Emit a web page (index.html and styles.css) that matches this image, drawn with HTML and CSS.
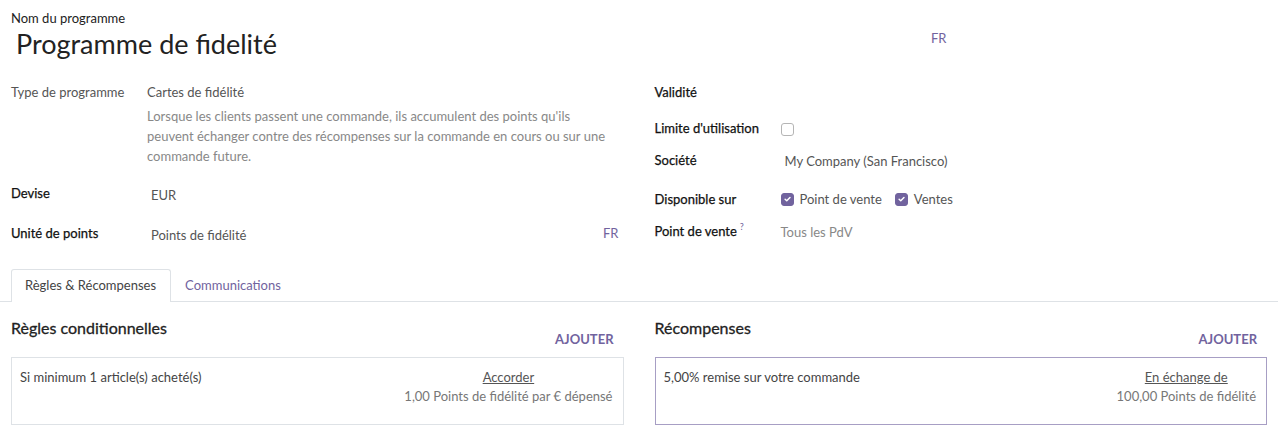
FILE: index.html
```html
<!DOCTYPE html>
<html lang="fr">
<head>
<meta charset="utf-8">
<title>Programme de fidelité</title>
<link rel="stylesheet" href="styles.css">
</head>
<body>
<div class="sheet">
  <div class="title-area">
    <div class="title-label">Nom du programme</div>
    <div class="title-row">
      <div class="title">Programme de fidelité</div>
      <span class="lang lang-title">FR</span>
    </div>
  </div>

  <div class="groups">
    <div class="group group-left">
      <div class="label label-light">Type de programme</div>
      <div class="value">
        <div class="val-main">Cartes de fidélité</div>
        <div class="desc">Lorsque les clients passent une commande, ils accumulent des points qu'ils peuvent échanger contre des récompenses sur la commande en cours ou sur une commande future.</div>
      </div>

      <div class="label row-devise">Devise</div>
      <div class="value input row-devise">EUR</div>

      <div class="label row-unit">Unité de points</div>
      <div class="value input row-unit unit-value"><span>Points de fidélité</span><span class="lang">FR</span></div>
    </div>

    <div class="group group-right">
      <div class="label r1">Validité</div>
      <div class="value r1"></div>

      <div class="label r2">Limite d'utilisation</div>
      <div class="value r2"><span class="check"></span></div>

      <div class="label r3">Société</div>
      <div class="value input r3 company">My Company (San Francisco)</div>

      <div class="label r4">Disponible sur</div>
      <div class="value r4 checks">
        <span class="check-item"><span class="check checked"><svg viewBox="0 0 12 12" width="12" height="12"><path d="M3.4 6.2 L5.2 8 L8.7 4.4" fill="none" stroke="#fff" stroke-width="1.6" stroke-linecap="round" stroke-linejoin="round"/></svg></span>Point de vente</span>
        <span class="check-item"><span class="check checked"><svg viewBox="0 0 12 12" width="12" height="12"><path d="M3.4 6.2 L5.2 8 L8.7 4.4" fill="none" stroke="#fff" stroke-width="1.6" stroke-linecap="round" stroke-linejoin="round"/></svg></span>Ventes</span>
      </div>

      <div class="label r5">Point de vente<sup class="help">?</sup></div>
      <div class="value r5 placeholder">Tous les PdV</div>
    </div>
  </div>

  <div class="tabs">
    <div class="tab active">Règles &amp; Récompenses</div>
    <div class="tab">Communications</div>
  </div>

  <div class="panels">
    <div class="panel">
      <div class="panel-head">
        <h3>Règles conditionnelles</h3>
        <span class="add">AJOUTER</span>
      </div>
      <div class="card">
        <div class="card-left">Si minimum 1 article(s) acheté(s)</div>
        <div class="card-right">
          <div class="card-link">Accorder</div>
          <div class="card-sub">1,00 Points de fidélité par € dépensé</div>
        </div>
      </div>
    </div>
    <div class="panel">
      <div class="panel-head">
        <h3>Récompenses</h3>
        <span class="add">AJOUTER</span>
      </div>
      <div class="card card-selected">
        <div class="card-left">5,00% remise sur votre commande</div>
        <div class="card-right">
          <div class="card-link">En échange de</div>
          <div class="card-sub">100,00 Points de fidélité</div>
        </div>
      </div>
    </div>
  </div>
</div>
</body>
</html>
```

FILE: styles.css
```css
* { box-sizing: border-box; }
html, body { margin: 0; padding: 0; background: #fff; }
body {
  font-family: "Lato", "Noto Sans", "DejaVu Sans", sans-serif;
  font-size: 13px;
  color: #212529;
  width: 1278px;
  height: 438px;
  overflow: hidden;
}
.sheet { padding: 10px 0 0 0; }

.title-area { padding: 0 11px; }
.title-label { font-size: 13px; line-height: 16px; color: #222; }
.title-row { display: flex; align-items: flex-start; }
.title {
  font-size: 27px;
  line-height: 36px;
  color: #222;
  padding-left: 5px;
  width: 920px;
}
.lang { color: #71639e; font-size: 13px; }
.lang-title { margin-top: 4px; }

.groups {
  display: grid;
  grid-template-columns: 1fr 1fr;
  column-gap: 31px;
  padding: 0 11px;
  margin-top: 22px;
}
.group { display: grid; align-content: start; }
.group-left { grid-template-columns: 136px 1fr; }
.group-right { grid-template-columns: 126px 1fr; }

.label { color: #111; line-height: 16px; -webkit-text-stroke: 0.25px #111; }
.label-light { color: #555; -webkit-text-stroke: 0; }
.value { color: #555; line-height: 16px; }
.value.input { padding-left: 4px; }
.val-main { color: #555; }
.desc { color: #888; line-height: 20px; margin-top: 6px; padding-right: 10px; }

.row-devise { margin-top: 19px; }
.value.row-devise { padding-top: 2px; }
.row-unit { margin-top: 22px; }
.value.row-unit { padding-top: 2px; }
.unit-value { display: flex; justify-content: space-between; padding-right: 5px; }
.unit-value .lang { margin-top: -2px; }

.r2 { margin-top: 20px; }
.r3 { margin-top: 16px; }
.value.r3 { padding-left: 4px; padding-top: 1px; }
.r4 { margin-top: 22px; }
.r5 { margin-top: 16px; }
.value.r5 { padding-top: 1px; }
.company { color: #555; }
.placeholder { color: #888; }
.help { color: #71639e; font-size: 9px; margin-left: 3px; vertical-align: 6px; line-height: 0; -webkit-text-stroke: 0; }

.check {
  display: inline-flex; align-items: center; justify-content: center;
  width: 13px; height: 13px;
  border: 1px solid #b5b5b5; border-radius: 3px;
  vertical-align: middle;
}
.check.checked { background: #71639e; border-color: #71639e; }
.checks { display: flex; gap: 13px; }
.check-item { display: inline-flex; align-items: center; gap: 6px; color: #555; }

.tabs {
  display: flex;
  margin-top: 26px;
  padding-left: 11px;
  border-bottom: 1px solid #dee2e6;
}
.tab {
  padding: 0 14px 0 13px;
  height: 33px;
  line-height: 31px;
  color: #71639e;
  border: 1px solid transparent;
  border-bottom: none;
  margin-bottom: -1px;
}
.tab.active {
  color: #444;
  background: #fff;
  border-color: #dee2e6;
  border-radius: 3px 3px 0 0;
}

.panels {
  display: grid;
  grid-template-columns: 1fr 1fr;
  column-gap: 31px;
  padding: 0 11px;
  margin-top: 16px;
}
.panel-head { display: flex; justify-content: space-between; align-items: flex-start; }
.panel-head h3 { margin: 0; font-size: 16px; font-weight: 400; line-height: 20px; color: #222; -webkit-text-stroke: 0.3px #222; }
.add { color: #71639e; font-weight: 700; font-size: 13px; margin-top: 13px; margin-right: 10px; line-height: 16px; }
.card {
  margin-top: 10px;
  border: 1px solid #dee2e6;
  height: 68px;
  display: flex;
  justify-content: space-between;
  padding: 10px 10px 0 8px;
  color: #444;
  line-height: 19px;
}
.card-selected { border-color: #a79ec4; }
.card-right { text-align: center; color: #444; }
.card-link { text-decoration: underline; color: #555; }
.card-sub { color: #777; }
```
